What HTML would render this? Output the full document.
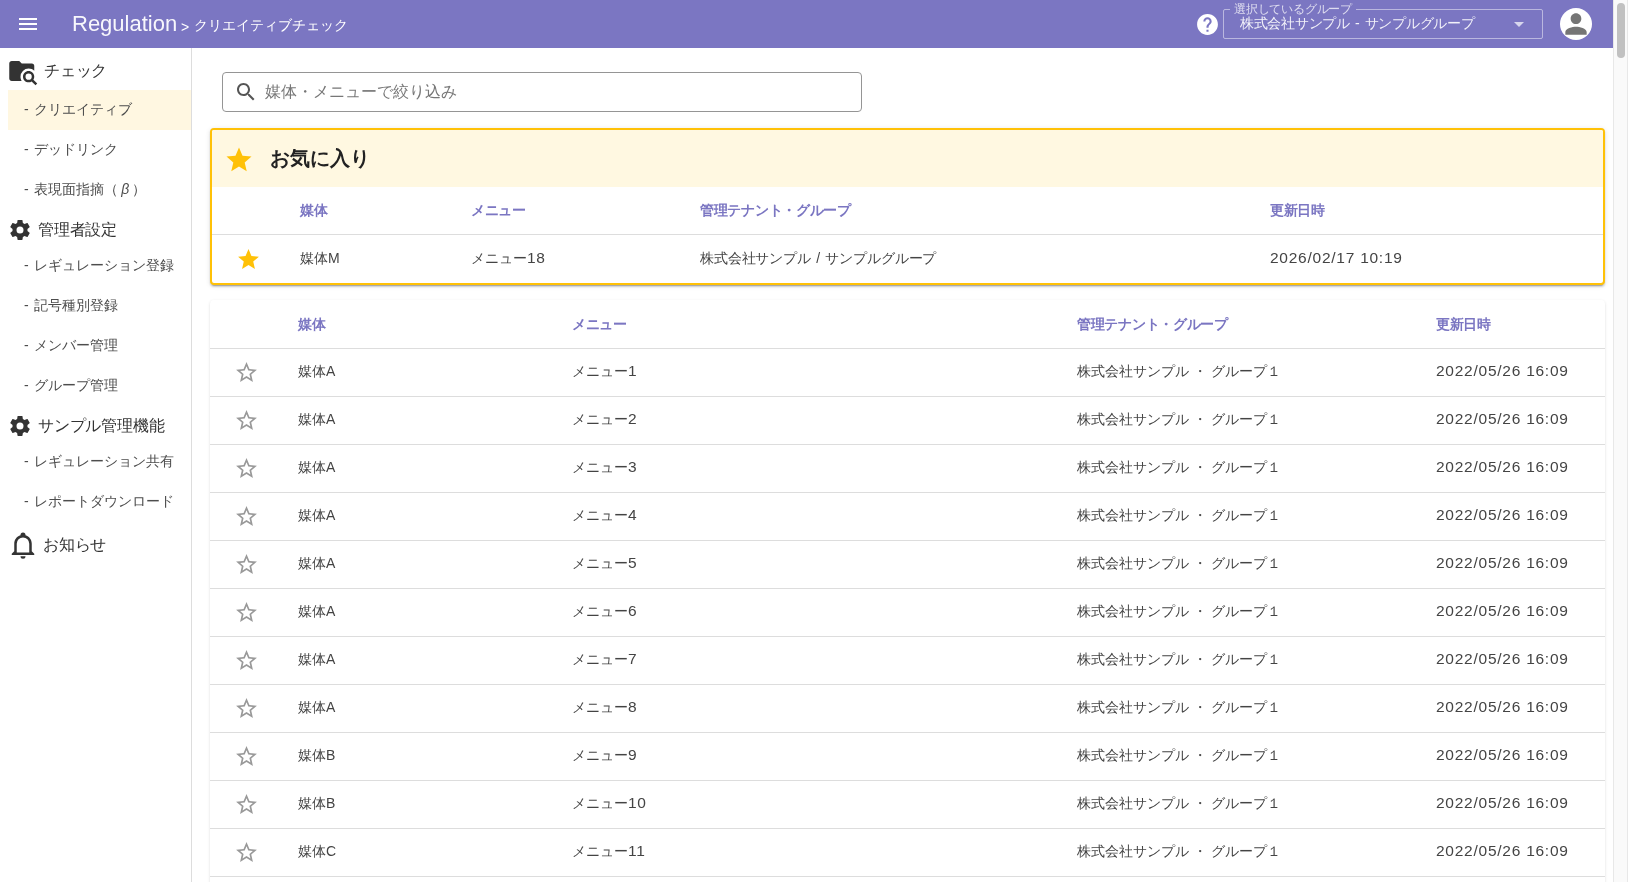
<!DOCTYPE html>
<html lang="ja">
<head>
<meta charset="utf-8">
<title>Regulation</title>
<style>
*{box-sizing:border-box;margin:0;padding:0}
html,body{width:1628px;height:882px;overflow:hidden;background:#fff}
body{position:relative;font-family:"Liberation Sans",sans-serif;color:#333;font-size:14px;line-height:1}
.abs{position:absolute}
svg{display:block}
#hdr,#side,#search,#fav,#tbl{will-change:transform}
#hdr{position:absolute;left:0;top:0;width:1613px;height:48px;background:#7b76c2;color:#fff}
#hdr .t{position:absolute;white-space:nowrap}
#sb{position:absolute;left:1613px;top:0;width:15px;height:882px;background:#fafafa;border-left:1px solid #e8e8e8;border-right:1px solid #e8e8e8}
#sb i{position:absolute;left:3px;top:3px;width:8px;height:55px;border-radius:4px;background:#c1c1c1}
#side{position:absolute;left:0;top:48px;width:192px;height:834px;border-right:1px solid #ddd;background:#fff}
#side .sel{position:absolute;left:8px;top:42px;width:183px;height:40px;background:#fff7e1}
#side .h{position:absolute;white-space:nowrap;font-size:16px;color:#333;line-height:20px;letter-spacing:-.2px}
#side .i{position:absolute;left:24px;white-space:nowrap;font-size:14px;color:#4d4d4d;line-height:20px;word-spacing:1.8px}
#search{position:absolute;left:222px;top:72px;width:640px;height:40px;border:1px solid #959595;border-radius:4px;background:#fff}
#search span{position:absolute;left:42px;top:9px;font-size:16px;line-height:20px;color:#777;white-space:nowrap}
#fav{position:absolute;left:210px;top:128px;width:1395px;height:157px;border:2px solid #ffc107;border-radius:4px;background:#fff;box-shadow:0 3px 1px -2px rgba(0,0,0,.2),0 2px 2px 0 rgba(0,0,0,.14),0 1px 5px 0 rgba(0,0,0,.12)}
#fav .band{position:absolute;left:0;top:0;width:1391px;height:57px;background:#fff8e1;border-radius:2px 2px 0 0}
#fav .title{position:absolute;left:57.5px;top:16px;font-size:20px;line-height:24px;font-weight:bold;color:#222;white-space:nowrap}
#fav .line{position:absolute;left:0;top:104px;width:1391px;height:1px;background:#ddd}
.th{position:absolute;white-space:nowrap;font-size:14px;line-height:20px;letter-spacing:-.3px;font-weight:bold;color:#7b76c2}
.td{position:absolute;white-space:nowrap;font-size:14px;line-height:20px;color:#444}
.n{font-size:15.5px;letter-spacing:.75px}
#tbl{position:absolute;left:210px;top:300px;width:1395px;height:600px;border-radius:4px;background:#fff;box-shadow:0 2px 1px -1px rgba(0,0,0,.1),0 1px 1px 0 rgba(0,0,0,.08),0 1px 3px 0 rgba(0,0,0,.13)}
#tbl .row{position:absolute;left:0;width:1395px;height:48px;border-top:1px solid #ddd}
</style>
</head>
<body>
<div id="hdr">
<svg class="abs" style="left:16px;top:12px" width="24" height="24" viewBox="0 0 24 24"><path fill="#fff" d="M3 18h18v-2H3v2zm0-5h18v-2H3v2zm0-7v2h18V6H3z"/></svg>
<div class="t x" id="brand" style="left:72px;top:11px;font-size:22px;line-height:26px;color:rgba(255,255,255,.94)">Regulation</div>
<div class="t x" id="gt" style="left:181px;top:17px;font-size:14px;line-height:20px">&gt;</div>
<div class="t x" id="crumb" style="left:193.5px;top:15px;font-size:14px;line-height:20px;width:154.01px;text-align-last:justify">クリエイティブチェック</div>
<svg class="abs" style="left:1194.9px;top:11.7px" width="25" height="25" viewBox="0 0 24 24"><path fill="#fff" d="M12 2C6.480 2 2 6.480 2 12s4.480 10 10 10 10-4.480 10-10S17.520 2 12 2zm1 17h-2v-2h2v2zm2.070-7.750l-.9.920C13.450 12.900 13 13.500 13 15h-2v-.5c0-1.100.450-2.100 1.170-2.830l1.240-1.260c.370-.360.590-.860.590-1.410 0-1.100-.9-2-2-2s-2 .9-2 2H8c0-2.210 1.790-4 4-4s4 1.790 4 4c0 .880-.360 1.680-.930 2.250z"/></svg>
<div class="abs" id="selbox" style="left:1223px;top:9px;width:320px;height:30px;border:1px solid rgba(255,255,255,.48);border-radius:2px"></div>
<div class="t x" id="sellabel" style="left:1230px;top:2px;padding:0 4px;background:#7b76c2;font-size:12px;line-height:14px;letter-spacing:-.2px;color:rgba(255,255,255,.75);width:126.03px;text-align-last:justify">選択しているグループ</div>
<div class="t x" id="selval" style="left:1240px;top:13px;font-size:14px;line-height:20px;letter-spacing:-.3px;word-spacing:1.8px;color:rgba(255,255,255,.9);width:234.35px;text-align-last:justify">株式会社サンプル - サンプルグループ</div>
<svg class="abs" style="left:1507px;top:12px" width="24" height="24" viewBox="0 0 24 24"><path fill="rgba(255,255,255,.7)" d="M7 10l5 5 5-5z"/></svg>
<div class="abs" style="left:1560px;top:8px;width:32px;height:32px;border-radius:50%;background:#fff"></div>
<svg class="abs" style="left:1560px;top:8px" width="32" height="32" viewBox="0 0 24 24"><path fill="#757575" d="M12 12c2.210 0 4-1.790 4-4s-1.790-4-4-4-4 1.790-4 4 1.790 4 4 4zm0 2c-2.670 0-8 1.340-8 4v2h16v-2c0-2.660-5.330-4-8-4z"/></svg>
</div>
<div id="side">
<div class="sel"></div>
<svg class="abs" style="left:7.9px;top:7.8px" width="30" height="30" viewBox="0 0 24 24"><path fill="#333" d="M16.5,12C19,12 21,14 21,16.5C21,17.38 20.75,18.21 20.31,18.9L23.39,22L22,23.39L18.88,20.32C18.19,20.75 17.37,21 16.5,21C14,21 12,19 12,16.5C12,14 14,12 16.5,12M16.5,14A2.5,2.5 0 0,0 14,16.5A2.5,2.5 0 0,0 16.5,19A2.5,2.5 0 0,0 19,16.5A2.5,2.5 0 0,0 16.5,14M9,4L11,6H19A2,2 0 0,1 21,8V11.81C19.83,10.69 18.25,10 16.5,10A6.5,6.5 0 0,0 10,16.5C10,17.79 10.37,19 11,20H3C1.89,20 1,19.1 1,18V6C1,4.89 1.89,4 3,4H9Z"/></svg>
<div class="h x" style="left:44px;top:13px;width:63.21px;text-align-last:justify">チェック</div>
<div class="i x" style="top:51px;width:108.37px;text-align-last:justify">- クリエイティブ</div>
<div class="i x" style="top:91px;width:94.37px;text-align-last:justify">- デッドリンク</div>
<div class="i x" style="top:131px;width:122.37px;text-align-last:justify">- 表現面指摘（<i style="margin:0 3px">β</i>）</div>
<svg class="abs" style="left:8px;top:170px" width="24" height="24" viewBox="0 0 24 24"><path fill="#333" d="M12,15.5A3.5,3.5 0 0,1 8.5,12A3.5,3.5 0 0,1 12,8.5A3.5,3.5 0 0,1 15.5,12A3.5,3.5 0 0,1 12,15.5M19.43,12.97C19.47,12.65 19.5,12.33 19.5,12C19.5,11.67 19.47,11.34 19.43,11L21.54,9.37C21.73,9.22 21.78,8.95 21.66,8.73L19.66,5.27C19.54,5.05 19.27,4.96 19.05,5.05L16.56,6.05C16.04,5.66 15.5,5.32 14.87,5.07L14.5,2.42C14.46,2.18 14.25,2 14,2H10C9.75,2 9.54,2.18 9.5,2.42L9.13,5.07C8.5,5.32 7.96,5.66 7.44,6.05L4.95,5.05C4.73,4.96 4.46,5.05 4.34,5.27L2.34,8.73C2.21,8.95 2.27,9.22 2.46,9.37L4.57,11C4.53,11.34 4.5,11.67 4.5,12C4.5,12.33 4.53,12.65 4.57,12.97L2.46,14.63C2.27,14.78 2.21,15.05 2.34,15.27L4.34,18.73C4.46,18.95 4.73,19.03 4.95,18.95L7.44,17.94C7.96,18.34 8.5,18.68 9.13,18.93L9.5,21.58C9.54,21.82 9.75,22 10,22H14C14.25,22 14.46,21.82 14.5,21.58L14.87,18.93C15.5,18.67 16.04,18.34 16.56,17.94L19.05,18.95C19.27,19.03 19.54,18.95 19.66,18.73L21.66,15.27C21.78,15.05 21.73,14.78 21.54,14.63L19.43,12.97Z"/></svg>
<div class="h x" style="left:38px;top:172px;width:79.03px;text-align-last:justify">管理者設定</div>
<div class="i x" style="top:207px;width:150.37px;text-align-last:justify">- レギュレーション登録</div>
<div class="i x" style="top:247px;width:94.37px;text-align-last:justify">- 記号種別登録</div>
<div class="i x" style="top:287px;width:94.37px;text-align-last:justify">- メンバー管理</div>
<div class="i x" style="top:327px;width:94.37px;text-align-last:justify">- グループ管理</div>
<svg class="abs" style="left:8px;top:366px" width="24" height="24" viewBox="0 0 24 24"><path fill="#333" d="M12,15.5A3.5,3.5 0 0,1 8.5,12A3.5,3.5 0 0,1 12,8.5A3.5,3.5 0 0,1 15.5,12A3.5,3.5 0 0,1 12,15.5M19.43,12.97C19.47,12.65 19.5,12.33 19.5,12C19.5,11.67 19.47,11.34 19.43,11L21.54,9.37C21.73,9.22 21.78,8.95 21.66,8.73L19.66,5.27C19.54,5.05 19.27,4.96 19.05,5.05L16.56,6.05C16.04,5.66 15.5,5.32 14.87,5.07L14.5,2.42C14.46,2.18 14.25,2 14,2H10C9.75,2 9.54,2.18 9.5,2.42L9.13,5.07C8.5,5.32 7.96,5.66 7.44,6.05L4.95,5.05C4.73,4.96 4.46,5.05 4.34,5.27L2.34,8.73C2.21,8.95 2.27,9.22 2.46,9.37L4.57,11C4.53,11.34 4.5,11.67 4.5,12C4.5,12.33 4.53,12.65 4.57,12.97L2.46,14.63C2.27,14.78 2.21,15.05 2.34,15.27L4.34,18.73C4.46,18.95 4.73,19.03 4.95,18.95L7.44,17.94C7.96,18.34 8.5,18.68 9.13,18.93L9.5,21.58C9.54,21.82 9.75,22 10,22H14C14.25,22 14.46,21.82 14.5,21.58L14.87,18.93C15.5,18.67 16.04,18.34 16.56,17.94L19.05,18.95C19.27,19.03 19.54,18.95 19.66,18.73L21.66,15.27C21.78,15.05 21.73,14.78 21.54,14.63L19.43,12.97Z"/></svg>
<div class="h x" style="left:38px;top:368px;width:126.42px;text-align-last:justify">サンプル管理機能</div>
<div class="i x" style="top:403px;width:150.37px;text-align-last:justify">- レギュレーション共有</div>
<div class="i x" style="top:443px;width:150.37px;text-align-last:justify">- レポートダウンロード</div>
<svg class="abs" style="left:8px;top:482px" width="30" height="30" viewBox="0 0 24 24"><path fill="#333" d="M10,21H14A2,2 0 0,1 12,23A2,2 0 0,1 10,21M21,19V20H3V19L5,17V11C5,7.9 7.03,5.17 10,4.29C10,4.19 10,4.1 10,4A2,2 0 0,1 12,2A2,2 0 0,1 14,4C14,4.1 14,4.19 14,4.29C16.97,5.17 19,7.9 19,11V17L21,19M17,11A5,5 0 0,0 12,6A5,5 0 0,0 7,11V18H17V11Z"/></svg>
<div class="h x" style="left:43px;top:487px;width:63.21px;text-align-last:justify">お知らせ</div>
</div>
<div id="search">
<svg class="abs" style="left:11px;top:7px" width="24" height="24" viewBox="0 0 24 24"><path fill="#555" d="M15.500 14h-.790l-.280-.270C15.410 12.590 16 11.110 16 9.500 16 5.910 13.090 3 9.500 3S3 5.910 3 9.500 5.910 16 9.500 16c1.610 0 3.090-.590 4.230-1.570l.270.280v.790l5 4.990L20.490 19l-4.990-5zm-6 0C7.010 14 5 11.990 5 9.500S7.010 5 9.500 5 14 7.010 14 9.500 11.990 14 9.500 14z"/></svg>
<span class="x" style="width:192.01px;text-align-last:justify">媒体・メニューで絞り込み</span>
</div>
<div id="fav">
<div class="band"></div>
<svg class="abs" style="left:11.6px;top:15.4px" width="30" height="30" viewBox="0 0 24 24"><path fill="#ffc107" d="M12 17.270L18.180 21l-1.640-7.030L22 9.240l-7.190-.610L12 2 9.190 8.630 2 9.240l5.460 4.730L5.820 21z"/></svg>
<div class="title x" style="width:100.01px;text-align-last:justify">お気に入り</div>
<div class="th x" style="left:88px;top:70px;width:27.42px;text-align-last:justify">媒体</div><div class="th x" style="left:259px;top:70px;width:54.82px;text-align-last:justify">メニュー</div><div class="th x" style="left:488px;top:70px;width:150.71px;text-align-last:justify">管理テナント・グループ</div><div class="th x" style="left:1058px;top:70px;width:54.82px;text-align-last:justify">更新日時</div>
<div class="line"></div>
<svg class="abs" style="left:24px;top:117px" width="25" height="25" viewBox="0 0 24 24"><path fill="#ffc107" d="M12 17.270L18.180 21l-1.640-7.030L22 9.240l-7.190-.610L12 2 9.190 8.630 2 9.240l5.460 4.730L5.820 21z"/></svg>
<div class="td x" style="left:88px;top:118px;width:39.68px;text-align-last:justify">媒体M</div><div class="td x" style="left:259px;top:118px;width:74.76px;text-align-last:justify">メニュー<span class="n">18</span></div><div class="td x" style="left:488px;top:118px;word-spacing:1.7px;letter-spacing:-.15px;width:236.24px;text-align-last:justify">株式会社サンプル / サンプルグループ</div><div class="td x" style="left:1058px;top:118px"><span class="n">2026/02/17 10:19</span></div>
</div>
<div id="tbl">
<div class="th x" style="left:88px;top:14px;width:27.42px;text-align-last:justify">媒体</div><div class="th x" style="left:362px;top:14px;width:54.82px;text-align-last:justify">メニュー</div><div class="th x" style="left:867px;top:14px;width:150.71px;text-align-last:justify">管理テナント・グループ</div><div class="th x" style="left:1226px;top:14px;width:54.82px;text-align-last:justify">更新日時</div>
<div class="row" style="top:48px"></div>
<svg class="abs" style="left:23.8px;top:60.3px" width="25" height="25" viewBox="0 0 24 24"><path fill="#999" d="M22 9.240l-7.190-.620L12 2 9.190 8.630 2 9.240l5.460 4.730L5.820 21 12 17.270 18.180 21l-1.630-7.030L22 9.240zM12 15.400l-3.760 2.270 1-4.280-3.320-2.880 4.380-.380L12 6.100l1.710 4.040 4.380.380-3.320 2.880 1 4.280L12 15.400z"/></svg>
<div class="td x" style="left:88px;top:61px;width:37.35px;text-align-last:justify">媒体A</div><div class="td x" style="left:362px;top:61px;width:65.39px;text-align-last:justify">メニュー<span class="n">1</span></div><div class="td x" style="left:867px;top:61px;width:203.79px;text-align-last:justify">株式会社サンプル ・ グループ１</div><div class="td x" style="left:1226px;top:61px"><span class="n">2022/05/26 16:09</span></div>
<div class="row" style="top:96px"></div>
<svg class="abs" style="left:23.8px;top:108.3px" width="25" height="25" viewBox="0 0 24 24"><path fill="#999" d="M22 9.240l-7.190-.620L12 2 9.190 8.630 2 9.240l5.460 4.730L5.820 21 12 17.270 18.180 21l-1.630-7.030L22 9.240zM12 15.400l-3.760 2.270 1-4.280-3.320-2.880 4.380-.380L12 6.100l1.710 4.040 4.380.380-3.320 2.880 1 4.280L12 15.400z"/></svg>
<div class="td x" style="left:88px;top:109px;width:37.35px;text-align-last:justify">媒体A</div><div class="td x" style="left:362px;top:109px;width:65.39px;text-align-last:justify">メニュー<span class="n">2</span></div><div class="td x" style="left:867px;top:109px;width:203.79px;text-align-last:justify">株式会社サンプル ・ グループ１</div><div class="td x" style="left:1226px;top:109px"><span class="n">2022/05/26 16:09</span></div>
<div class="row" style="top:144px"></div>
<svg class="abs" style="left:23.8px;top:156.3px" width="25" height="25" viewBox="0 0 24 24"><path fill="#999" d="M22 9.240l-7.190-.620L12 2 9.190 8.630 2 9.240l5.460 4.730L5.820 21 12 17.270 18.180 21l-1.630-7.030L22 9.240zM12 15.400l-3.760 2.270 1-4.280-3.320-2.880 4.380-.380L12 6.100l1.710 4.040 4.380.380-3.320 2.880 1 4.280L12 15.400z"/></svg>
<div class="td x" style="left:88px;top:157px;width:37.35px;text-align-last:justify">媒体A</div><div class="td x" style="left:362px;top:157px;width:65.39px;text-align-last:justify">メニュー<span class="n">3</span></div><div class="td x" style="left:867px;top:157px;width:203.79px;text-align-last:justify">株式会社サンプル ・ グループ１</div><div class="td x" style="left:1226px;top:157px"><span class="n">2022/05/26 16:09</span></div>
<div class="row" style="top:192px"></div>
<svg class="abs" style="left:23.8px;top:204.3px" width="25" height="25" viewBox="0 0 24 24"><path fill="#999" d="M22 9.240l-7.190-.620L12 2 9.190 8.630 2 9.240l5.460 4.730L5.820 21 12 17.270 18.180 21l-1.630-7.030L22 9.240zM12 15.400l-3.760 2.270 1-4.280-3.320-2.880 4.380-.380L12 6.100l1.710 4.040 4.380.380-3.320 2.880 1 4.280L12 15.400z"/></svg>
<div class="td x" style="left:88px;top:205px;width:37.35px;text-align-last:justify">媒体A</div><div class="td x" style="left:362px;top:205px;width:65.39px;text-align-last:justify">メニュー<span class="n">4</span></div><div class="td x" style="left:867px;top:205px;width:203.79px;text-align-last:justify">株式会社サンプル ・ グループ１</div><div class="td x" style="left:1226px;top:205px"><span class="n">2022/05/26 16:09</span></div>
<div class="row" style="top:240px"></div>
<svg class="abs" style="left:23.8px;top:252.3px" width="25" height="25" viewBox="0 0 24 24"><path fill="#999" d="M22 9.240l-7.190-.620L12 2 9.190 8.630 2 9.240l5.460 4.730L5.820 21 12 17.270 18.180 21l-1.630-7.030L22 9.240zM12 15.400l-3.760 2.270 1-4.280-3.320-2.880 4.380-.380L12 6.100l1.710 4.040 4.380.380-3.320 2.880 1 4.280L12 15.400z"/></svg>
<div class="td x" style="left:88px;top:253px;width:37.35px;text-align-last:justify">媒体A</div><div class="td x" style="left:362px;top:253px;width:65.39px;text-align-last:justify">メニュー<span class="n">5</span></div><div class="td x" style="left:867px;top:253px;width:203.79px;text-align-last:justify">株式会社サンプル ・ グループ１</div><div class="td x" style="left:1226px;top:253px"><span class="n">2022/05/26 16:09</span></div>
<div class="row" style="top:288px"></div>
<svg class="abs" style="left:23.8px;top:300.3px" width="25" height="25" viewBox="0 0 24 24"><path fill="#999" d="M22 9.240l-7.190-.620L12 2 9.190 8.630 2 9.240l5.460 4.730L5.820 21 12 17.270 18.180 21l-1.630-7.030L22 9.240zM12 15.400l-3.760 2.270 1-4.280-3.320-2.880 4.380-.380L12 6.100l1.710 4.040 4.380.380-3.320 2.880 1 4.280L12 15.400z"/></svg>
<div class="td x" style="left:88px;top:301px;width:37.35px;text-align-last:justify">媒体A</div><div class="td x" style="left:362px;top:301px;width:65.39px;text-align-last:justify">メニュー<span class="n">6</span></div><div class="td x" style="left:867px;top:301px;width:203.79px;text-align-last:justify">株式会社サンプル ・ グループ１</div><div class="td x" style="left:1226px;top:301px"><span class="n">2022/05/26 16:09</span></div>
<div class="row" style="top:336px"></div>
<svg class="abs" style="left:23.8px;top:348.3px" width="25" height="25" viewBox="0 0 24 24"><path fill="#999" d="M22 9.240l-7.190-.620L12 2 9.190 8.630 2 9.240l5.460 4.730L5.820 21 12 17.270 18.180 21l-1.630-7.030L22 9.240zM12 15.400l-3.760 2.270 1-4.280-3.320-2.880 4.380-.380L12 6.100l1.710 4.040 4.380.380-3.320 2.880 1 4.280L12 15.400z"/></svg>
<div class="td x" style="left:88px;top:349px;width:37.35px;text-align-last:justify">媒体A</div><div class="td x" style="left:362px;top:349px;width:65.39px;text-align-last:justify">メニュー<span class="n">7</span></div><div class="td x" style="left:867px;top:349px;width:203.79px;text-align-last:justify">株式会社サンプル ・ グループ１</div><div class="td x" style="left:1226px;top:349px"><span class="n">2022/05/26 16:09</span></div>
<div class="row" style="top:384px"></div>
<svg class="abs" style="left:23.8px;top:396.3px" width="25" height="25" viewBox="0 0 24 24"><path fill="#999" d="M22 9.240l-7.190-.620L12 2 9.190 8.630 2 9.240l5.460 4.730L5.820 21 12 17.270 18.180 21l-1.630-7.030L22 9.240zM12 15.400l-3.760 2.270 1-4.280-3.320-2.880 4.380-.380L12 6.100l1.710 4.040 4.380.380-3.320 2.880 1 4.280L12 15.400z"/></svg>
<div class="td x" style="left:88px;top:397px;width:37.35px;text-align-last:justify">媒体A</div><div class="td x" style="left:362px;top:397px;width:65.39px;text-align-last:justify">メニュー<span class="n">8</span></div><div class="td x" style="left:867px;top:397px;width:203.79px;text-align-last:justify">株式会社サンプル ・ グループ１</div><div class="td x" style="left:1226px;top:397px"><span class="n">2022/05/26 16:09</span></div>
<div class="row" style="top:432px"></div>
<svg class="abs" style="left:23.8px;top:444.3px" width="25" height="25" viewBox="0 0 24 24"><path fill="#999" d="M22 9.240l-7.190-.620L12 2 9.190 8.630 2 9.240l5.460 4.730L5.820 21 12 17.270 18.180 21l-1.630-7.030L22 9.240zM12 15.400l-3.760 2.270 1-4.280-3.320-2.880 4.380-.380L12 6.100l1.710 4.040 4.380.380-3.320 2.880 1 4.280L12 15.400z"/></svg>
<div class="td x" style="left:88px;top:445px;width:37.35px;text-align-last:justify">媒体B</div><div class="td x" style="left:362px;top:445px;width:65.39px;text-align-last:justify">メニュー<span class="n">9</span></div><div class="td x" style="left:867px;top:445px;width:203.79px;text-align-last:justify">株式会社サンプル ・ グループ１</div><div class="td x" style="left:1226px;top:445px"><span class="n">2022/05/26 16:09</span></div>
<div class="row" style="top:480px"></div>
<svg class="abs" style="left:23.8px;top:492.3px" width="25" height="25" viewBox="0 0 24 24"><path fill="#999" d="M22 9.240l-7.190-.620L12 2 9.190 8.630 2 9.240l5.460 4.730L5.820 21 12 17.270 18.180 21l-1.630-7.030L22 9.240zM12 15.400l-3.760 2.270 1-4.280-3.320-2.880 4.380-.380L12 6.100l1.710 4.040 4.380.380-3.320 2.880 1 4.280L12 15.400z"/></svg>
<div class="td x" style="left:88px;top:493px;width:37.35px;text-align-last:justify">媒体B</div><div class="td x" style="left:362px;top:493px;width:74.76px;text-align-last:justify">メニュー<span class="n">10</span></div><div class="td x" style="left:867px;top:493px;width:203.79px;text-align-last:justify">株式会社サンプル ・ グループ１</div><div class="td x" style="left:1226px;top:493px"><span class="n">2022/05/26 16:09</span></div>
<div class="row" style="top:528px"></div>
<svg class="abs" style="left:23.8px;top:540.3px" width="25" height="25" viewBox="0 0 24 24"><path fill="#999" d="M22 9.240l-7.190-.620L12 2 9.190 8.630 2 9.240l5.460 4.730L5.820 21 12 17.270 18.180 21l-1.630-7.030L22 9.240zM12 15.400l-3.760 2.270 1-4.280-3.320-2.880 4.380-.380L12 6.100l1.710 4.040 4.380.380-3.320 2.880 1 4.280L12 15.400z"/></svg>
<div class="td x" style="left:88px;top:541px;width:38.13px;text-align-last:justify">媒体C</div><div class="td x" style="left:362px;top:541px;width:73.60px;text-align-last:justify">メニュー<span class="n">11</span></div><div class="td x" style="left:867px;top:541px;width:203.79px;text-align-last:justify">株式会社サンプル ・ グループ１</div><div class="td x" style="left:1226px;top:541px"><span class="n">2022/05/26 16:09</span></div>
<div class="row" style="top:576px"></div>
<svg class="abs" style="left:23.8px;top:588.3px" width="25" height="25" viewBox="0 0 24 24"><path fill="#999" d="M22 9.240l-7.190-.620L12 2 9.190 8.630 2 9.240l5.460 4.730L5.820 21 12 17.270 18.180 21l-1.630-7.030L22 9.240zM12 15.400l-3.760 2.270 1-4.280-3.320-2.880 4.380-.380L12 6.100l1.710 4.040 4.380.380-3.320 2.880 1 4.280L12 15.400z"/></svg>
<div class="td x" style="left:88px;top:589px;width:38.13px;text-align-last:justify">媒体C</div><div class="td x" style="left:362px;top:589px;width:74.76px;text-align-last:justify">メニュー<span class="n">12</span></div><div class="td x" style="left:867px;top:589px;width:203.79px;text-align-last:justify">株式会社サンプル ・ グループ１</div><div class="td x" style="left:1226px;top:589px"><span class="n">2022/05/26 16:09</span></div>
</div>
<div id="sb"><i></i></div>
</body>
</html>
